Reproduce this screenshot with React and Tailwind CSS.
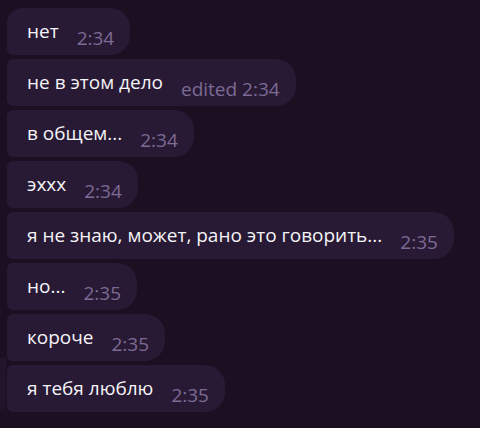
const messages = [
  { text: "нет", time: "2:34" },
  { text: "не в этом дело", time: "edited 2:34" },
  { text: "в общем...", time: "2:34" },
  { text: "эххх", time: "2:34" },
  { text: "я не знаю, может, рано это говорить...", time: "2:35" },
  { text: "но...", time: "2:35" },
  { text: "короче", time: "2:35" },
  { text: "я тебя люблю", time: "2:35" },
];

function Bubble({ text, time, first }) {
  return (
    <div
      className={
        "relative flex items-start self-start bg-[#281a34] pl-5 pr-[16px] pt-[11px] pb-[5px] rounded-r-[20px] rounded-bl-[6px] " +
        (first ? "rounded-tl-[15px]" : "rounded-tl-[6px]")
      }
    >
      <span className="text-[19px] leading-6 text-[#f6f4f8] whitespace-nowrap">{text}</span>
      <span className="ml-[18px] mt-[7px] text-[19px] leading-6 text-[#7d6a95] whitespace-nowrap">
        {time}
      </span>
    </div>
  );
}

export default function App() {
  return (
    <div
      className="relative h-[428px] w-[480px] overflow-hidden bg-[#1b0f21]"
      style={{ fontFamily: '"Open Sans", "Noto Sans", sans-serif' }}
    >
      {/* edge of the avatar column, cut off on the left */}
      <div className="absolute left-0 top-[358px] h-[52px] w-[6px] rounded-br-[8px] bg-[#22142b]" />
      <div className="flex flex-col gap-1 pl-[7px] pt-2">
        {messages.map((m, i) => (
          <Bubble key={i} text={m.text} time={m.time} first={i === 0} />
        ))}
      </div>
    </div>
  );
}
